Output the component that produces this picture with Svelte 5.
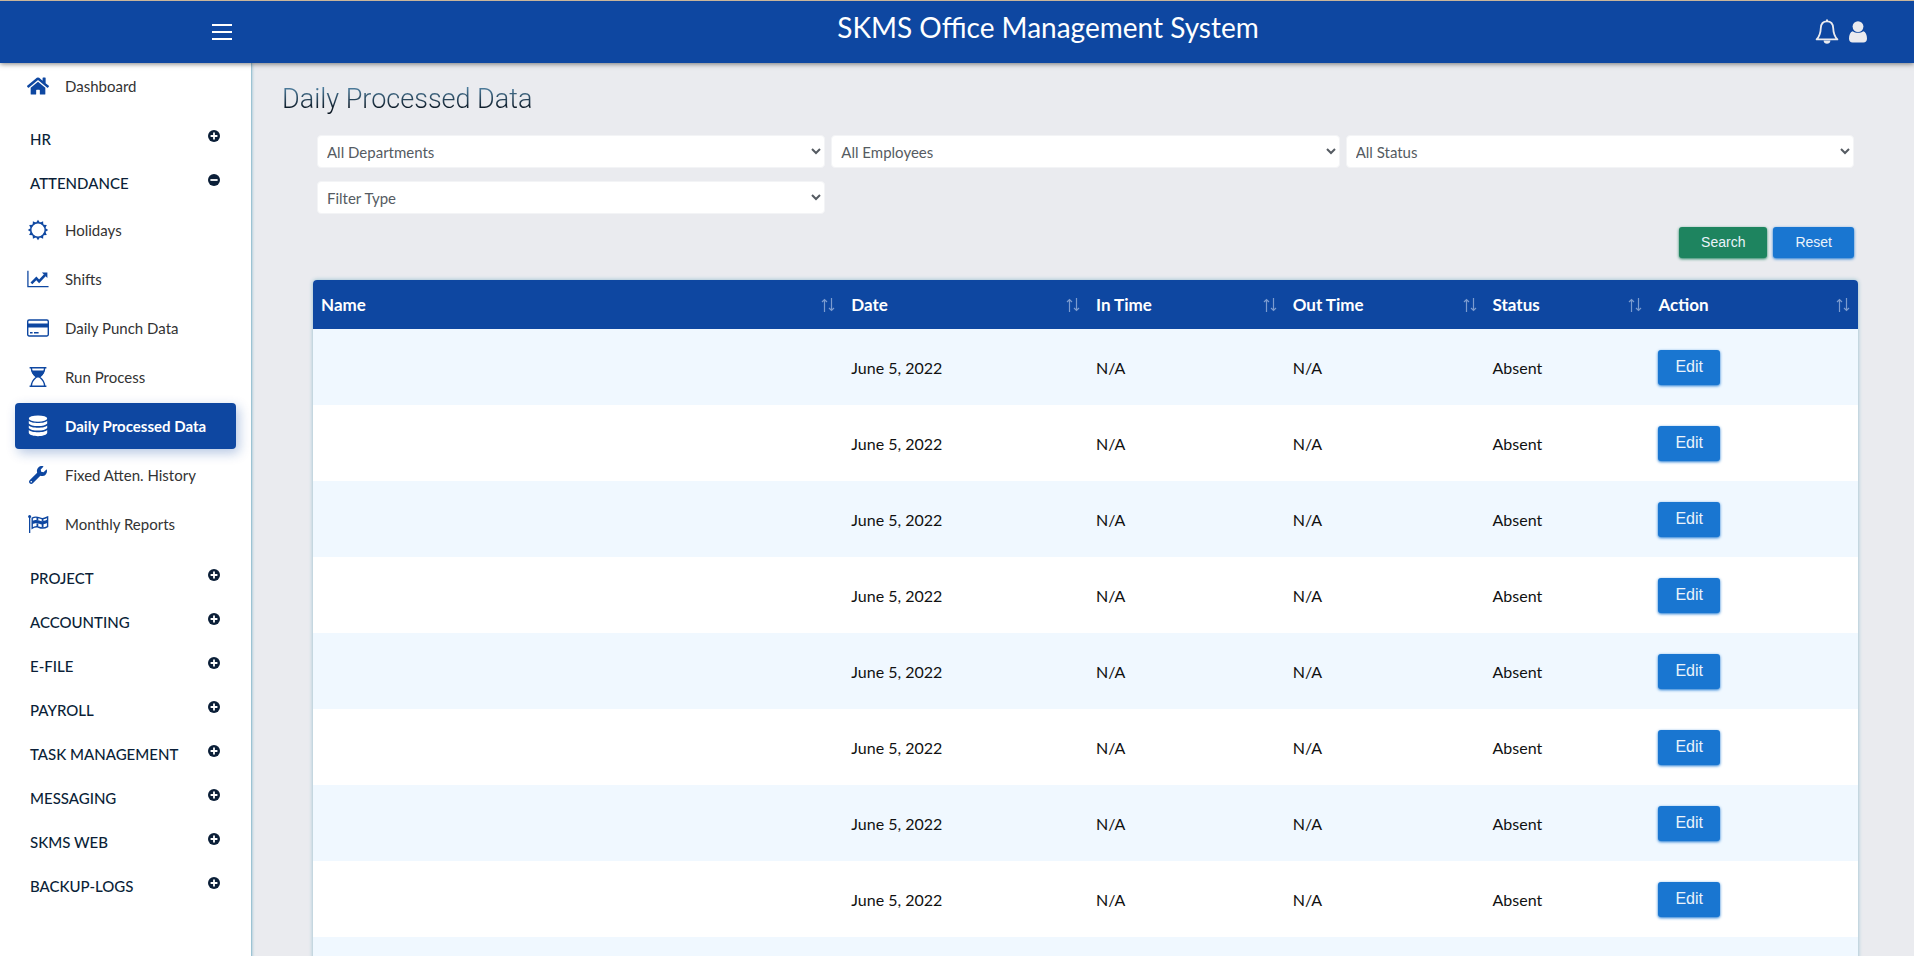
<script>
  let openSection = $state("ATTENDANCE");
  let active = $state("Daily Processed Data");

  const sections = [
    { name: "HR", items: [] },
    {
      name: "ATTENDANCE",
      items: [
        { title: "Holidays", icon: "sun" },
        { title: "Shifts", icon: "chart" },
        { title: "Daily Punch Data", icon: "card" },
        { title: "Run Process", icon: "hourglass" },
        { title: "Daily Processed Data", icon: "database" },
        { title: "Fixed Atten. History", icon: "wrench" },
        { title: "Monthly Reports", icon: "flag" },
      ],
    },
    { name: "PROJECT", items: [] },
    { name: "ACCOUNTING", items: [] },
    { name: "E-FILE", items: [] },
    { name: "PAYROLL", items: [] },
    { name: "TASK MANAGEMENT", items: [] },
    { name: "MESSAGING", items: [] },
    { name: "SKMS WEB", items: [] },
    { name: "BACKUP-LOGS", items: [] },
  ];

  const filters = [
    { id: "department", label: "Department", text: "All Departments" },
    { id: "employee", label: "Employee", text: "All Employees" },
    { id: "status", label: "Status", text: "All Status" },
    { id: "type", label: "Filter type", text: "Filter Type" },
  ];

  const columns = ["Name", "Date", "In Time", "Out Time", "Status", "Action"];

  const rows = Array.from({ length: 9 }, () => ({
    name: "",
    date: "June 5, 2022",
    inTime: "N/A",
    outTime: "N/A",
    status: "Absent",
  }));

  function toggle(name) {
    openSection = openSection === name ? "" : name;
  }
</script>

{#snippet icon(name)}
  {#if name === "home"}
    <svg class="icon" viewBox="0 0 576 512" aria-hidden="true">
      <path d="M280.37 148.26L96 300.11V464a16 16 0 0 0 16 16l112.06-.29a16 16 0 0 0 15.92-16V368a16 16 0 0 1 16-16h64a16 16 0 0 1 16 16v95.64a16 16 0 0 0 16 16.05L464 480a16 16 0 0 0 16-16V300L295.67 148.26a12.19 12.19 0 0 0-15.3 0zM571.6 251.47L488 182.56V44.05a12 12 0 0 0-12-12h-56a12 12 0 0 0-12 12v72.61L318.47 43a48 48 0 0 0-61 0L4.34 251.47a12 12 0 0 0-1.6 16.9l25.5 31A12 12 0 0 0 45.15 301l235.22-193.74a12.19 12.19 0 0 1 15.3 0L530.9 301a12 12 0 0 0 16.9-1.6l25.5-31a12 12 0 0 0-1.7-16.93z" />
    </svg>
  {:else if name === "sun"}
    <svg class="icon" viewBox="0 0 22 22" aria-hidden="true">
      <circle cx="11" cy="11" r="7.2" fill="none" stroke="currentColor" stroke-width="1.4" />
      {#each Array(12) as _, i}
        <path d="M9 3.8 11 .8l2 3z" transform="rotate({i * 30} 11 11)" />
      {/each}
    </svg>
  {:else if name === "chart"}
    <svg class="icon" viewBox="0 0 24 20" aria-hidden="true">
      <path d="M1 1v17.2h22.5" fill="none" stroke="currentColor" stroke-width="1.4" />
      <path d="M4.8 14.8l5.400-5.400 3 3.200 6.400-6.800" fill="none" stroke="currentColor" stroke-width="2.8" />
      <path d="M16.200 2.800h6v6z" />
    </svg>
  {:else if name === "card"}
    <svg class="icon" viewBox="0 0 22 20" aria-hidden="true">
      <rect x=".7" y="2" width="20.6" height="16" rx="1.4" fill="none" stroke="currentColor" stroke-width="1.4" />
      <path d="M.7 5.6h20.6v4H.7zM3 14h2.6v1.4H3zM7 14h4.6v1.4H7z" />
    </svg>
  {:else if name === "hourglass"}
    <svg class="icon" viewBox="0 0 22 22" aria-hidden="true">
      <path d="M2.6 1.8h16.8M2.6 20.2h16.8M4.4 2c0 5 2.6 7 5 9-2.4 2-5 4-5 9M17.6 2c0 5-2.6 7-5 9 2.400 2 5 4 5 9" fill="none" stroke="currentColor" stroke-width="1.4" />
      <path d="M4.6 4.400h12.800c-.4 3.600-2.400 5.200-5 7h-2.800C7 9.600 5 8 4.600 4.400z" />
    </svg>
  {:else if name === "database"}
    <svg class="icon" viewBox="0 0 22 22" aria-hidden="true">
      <ellipse cx="11" cy="3.6" rx="9.2" ry="3.2" />
      <path d="M1.8 5.8c2.400 3 16 3 18.400 0v2.600c-1.800 3.400-16.600 3.400-18.400 0z" />
      <path d="M1.8 10.4c2.400 3 16 3 18.400 0V13c-1.800 3.400-16.600 3.400-18.400 0z" />
      <path d="M1.8 15c2.400 3 16 3 18.400 0v3c-1.800 4.200-16.600 4.200-18.400 0z" />
    </svg>
  {:else if name === "wrench"}
    <svg class="icon small" viewBox="0 0 512 512" aria-hidden="true">
      <path d="M507.73 109.1c-2.24-9.03-13.54-12.09-20.12-5.51l-74.36 74.36-67.88-11.31-11.31-67.88 74.36-74.36c6.62-6.62 3.43-17.9-5.66-20.16-47.38-11.74-99.55.91-136.58 37.93-39.64 39.64-50.55 97.1-34.05 147.2L18.74 402.76c-24.99 24.99-24.99 65.51 0 90.5 24.99 24.99 65.51 24.99 90.5 0l213.21-213.21c50.12 16.71 107.47 5.68 147.37-34.22 37.07-37.07 49.7-89.32 37.91-136.73zM64 472c-13.25 0-24-10.75-24-24 0-13.26 10.75-24 24-24s24 10.74 24 24c0 13.25-10.75 24-24 24z" />
    </svg>
  {:else if name === "flag"}
    <svg class="icon" viewBox="0 0 22 20" aria-hidden="true">
      <circle cx="2.6" cy="2.4" r="1.5" />
      <path d="M2 3h1.300v16H2z" />
      <path d="M5.200 4.200c5-3 7.400.8 10.400.4 2-.2 3.600-1 5-1.600v9.600c-5 3-7.600 1-10 .2-2-.4-4 .4-5.400 1.400z" fill="none" stroke="currentColor" stroke-width="1.400" />
      <path d="M5.200 7.200c5-2.800 7.400.4 10.400 0 2-.2 3.600-1 5-1.600v3.200c-1.400.6-3 1.400-5 1.600-3 .4-5.400-2.800-10.400 0z" />
      <path d="M10.400 3v3.400M10.400 9.400v3.400M15.600 4.600v3M15.600 10v3.400" fill="none" stroke="currentColor" stroke-width="1.800" />
    </svg>
  {/if}
{/snippet}

{#snippet link(title, iconName)}
  <a
    href="#{title}"
    class="item"
    class:active={active === title}
    onclick={() => (active = title)}
  >
    <span class="item-icon">{@render icon(iconName)}</span>
    {title}
  </a>
{/snippet}

<header class="topbar">
  <button class="menu" aria-label="Toggle menu">
    <svg width="22" height="18" viewBox="0 0 22 18">
      <path d="M1 2h20M1 9h20M1 16h20" stroke="#fff" stroke-width="2" />
    </svg>
  </button>
  <div class="brand">SKMS Office Management System</div>
  <div class="tools">
    <button aria-label="Notifications">
      <svg width="24" height="26" viewBox="0 0 24 26">
        <path d="M12 2.4c-4.2 0-6 3-6.2 6.6-.2 5.6-1.400 8.600-4.200 11.400h20.800c-2.800-2.800-4-5.800-4.200-11.400C18 5.400 16.200 2.400 12 2.400z" fill="none" stroke="#eaebef" stroke-width="1.8" stroke-linejoin="round" />
        <path d="M8.600 21.400h6.800c0 4.400-6.800 4.400-6.800 0zM11 .6h2v2h-2z" fill="#eaebef" />
      </svg>
    </button>
    <button aria-label="Account">
      <svg width="18" height="22" viewBox="0 0 18 22">
        <path d="M3.8 10.2C1.400 10.800 0 13.600 0 17.600 0 20 1.400 21.600 3.600 21.600h10.800c2.200 0 3.600-1.600 3.600-4 0-4-1.400-6.800-3.800-7.400-2.600 2-7.800 2-10.400 0z" fill="#eaebef" />
        <circle cx="9" cy="5.6" r="5.4" fill="#eaebef" />
      </svg>
    </button>
  </div>
</header>

<div class="body">
  <nav class="sidebar">
    {@render link("Dashboard", "home")}
    <div class="sections">
      {#each sections as section}
        <button class="section" onclick={() => toggle(section.name)}>
          {section.name}
          <svg width="12" height="12" viewBox="0 0 12 12" aria-hidden="true">
            <circle cx="6" cy="6" r="6" fill="#0b1f38" />
            <path
              d={openSection === section.name ? "M2.4 6h7.2" : "M2.6 6h6.8M6 2.6v6.8"}
              stroke="#fff"
              stroke-width="1.8"
            />
          </svg>
        </button>
        {#if openSection === section.name && section.items.length}
          <div class="submenu">
            {#each section.items as item}
              {@render link(item.title, item.icon)}
            {/each}
          </div>
        {/if}
      {/each}
    </div>
  </nav>

  <main>
    <h1>Daily Processed Data</h1>

    <form onsubmit={(e) => e.preventDefault()}>
      <div class="filters">
        {#each filters as filter}
          <select id={filter.id} aria-label={filter.label}>
            <option>{filter.text}</option>
          </select>
        {/each}
      </div>
      <div class="actions">
        <button class="btn search" type="submit">Search</button>
        <button class="btn" type="reset">Reset</button>
      </div>
    </form>

    <table>
      <thead>
        <tr>
          {#each columns as column}
            <th>
              <div class="head">
                {column}
                <svg width="14" height="14" viewBox="0 0 14 14" aria-hidden="true">
                  <path d="M3.5 14V1.5M1 4l2.500-2.500L6 4M10.500 0v12.500M8 10l2.500 2.500L13 10" />
                </svg>
              </div>
            </th>
          {/each}
        </tr>
      </thead>
      <tbody>
        {#each rows as row}
          <tr>
            <td>{row.name}</td>
            <td>{row.date}</td>
            <td>{row.inTime}</td>
            <td>{row.outTime}</td>
            <td>{row.status}</td>
            <td><button class="btn edit">Edit</button></td>
          </tr>
        {/each}
      </tbody>
    </table>
  </main>
</div>

<style>
  :global(html) {
    scrollbar-width: none;
  }

  :global(body) {
    background: #eaebef;
    font-family: Lato, "Liberation Sans", sans-serif;
  }

  button {
    border: none;
    background: none;
    padding: 0;
    font-family: inherit;
    cursor: pointer;
  }

  svg {
    display: block;
  }

  .topbar {
    position: sticky;
    top: 0;
    display: grid;
    grid-template-columns: 281px 1fr 99px;
    height: 62px;
    border-top: 1px solid #c9b59a;
    background: #0e47a1;
    box-shadow: 0 1px 5px rgba(0, 0, 0, 0.5);
    z-index: 2;
  }

  .menu {
    justify-self: end;
    align-self: center;
    margin-right: 48px;
  }

  .brand {
    color: #fff;
    font-size: 28px;
    line-height: 52px;
    text-align: center;
    white-space: nowrap;
  }

  .tools {
    display: flex;
    align-items: center;
    gap: 10px;
  }

  .body {
    display: flex;
  }

  .sidebar {
    flex: none;
    width: 252px;
    box-sizing: border-box;
    padding: 0 15px;
    background: #fff;
    border-right: 1px solid #9cc3d3;
    box-shadow: 0 0 3px #8fbccd;
    z-index: 1;
  }

  .sections {
    padding-top: 8px;
  }

  .section {
    display: flex;
    justify-content: space-between;
    align-items: center;
    width: 100%;
    height: 44px;
    padding: 0 16px 0 15px;
    color: #0b1f38;
    font-size: 15px;
    font-weight: 500;
  }

  .section svg {
    margin-bottom: 6px;
  }

  .submenu {
    display: flex;
    flex-direction: column;
    gap: 3px;
    padding: 2px 0 9px;
  }

  .item {
    display: flex;
    align-items: center;
    gap: 16px;
    height: 46px;
    padding-left: 12px;
    border-radius: 4px;
    color: #333;
    font-size: 15px;
    text-decoration: none;
  }

  .item-icon {
    width: 22px;
    color: #0e47a1;
  }

  .icon {
    width: 22px;
    height: 22px;
    margin: 0 auto;
    fill: currentColor;
  }

  .icon.small {
    width: 18px;
    height: 18px;
  }

  .item.active {
    background: #0e47a1;
    color: #fff;
    font-weight: 700;
    box-shadow: 3px 4px 12px rgba(14, 71, 161, 0.3);
  }

  .active .item-icon {
    color: #fff;
  }

  main {
    flex: 1;
    min-width: 0;
    padding: 16px 56px 24px 61px;
  }

  h1 {
    width: fit-content;
    margin: 0 0 16px -31px;
    font-family: Roboto, "Open Sans", sans-serif;
    font-size: 27px;
    font-weight: 300;
    line-height: 40px;
    background: linear-gradient(#5b93b8 10%, #0a1622 75%);
    background-clip: text;
    color: transparent;
  }

  form {
    padding: 0 4px;
  }

  .filters {
    display: grid;
    grid-template-columns: repeat(3, 1fr);
    gap: 13px 6px;
  }

  select {
    height: 33px;
    padding: 0 5px;
    border: 1px solid #f3f4f6;
    border-radius: 4px;
    background: #fff;
    color: #555b62;
    font-family: inherit;
    font-size: 15px;
  }

  .actions {
    display: flex;
    justify-content: flex-end;
    gap: 6px;
    padding: 13px 0 22px;
  }

  .btn {
    height: 31px;
    padding: 0 22px 2px;
    border-radius: 3px;
    background: #1976d1;
    box-shadow: 0 1px 3px #1976d1;
    color: #eaf3fb;
    font-family: "Liberation Sans", Arial, sans-serif;
    font-size: 14px;
  }

  .search {
    background: #1e845f;
    box-shadow: 0 1px 3px #1e845f;
  }

  .edit {
    height: 35px;
    padding: 0 17px;
    font-size: 16px;
  }

  table {
    width: 100%;
    table-layout: fixed;
    border-collapse: collapse;
    border-radius: 4px 4px 0 0;
    overflow: hidden;
    background: #fff;
    box-shadow: 0 0 4px #8fbccd;
    color: #111;
    font-size: 16px;
  }

  th {
    height: 49px;
    padding: 0 8px;
    background: #0e47a1;
    color: #fff;
    font-size: 17px;
    text-align: left;
  }

  th:nth-child(2) {
    width: 14.8%;
  }

  th:nth-child(3) {
    width: 11.7%;
  }

  th:nth-child(4) {
    width: 11.9%;
  }

  th:nth-child(5) {
    width: 9.7%;
  }

  th:nth-child(6) {
    width: 12.4%;
  }

  .head {
    display: flex;
    justify-content: space-between;
    align-items: center;
  }

  .head path {
    fill: none;
    stroke: #7b9bcf;
    stroke-width: 1.2;
  }

  td {
    height: 76px;
    padding: 0 8px;
  }

  tbody tr:nth-child(odd) {
    background: #f0f8ff;
  }
</style>
